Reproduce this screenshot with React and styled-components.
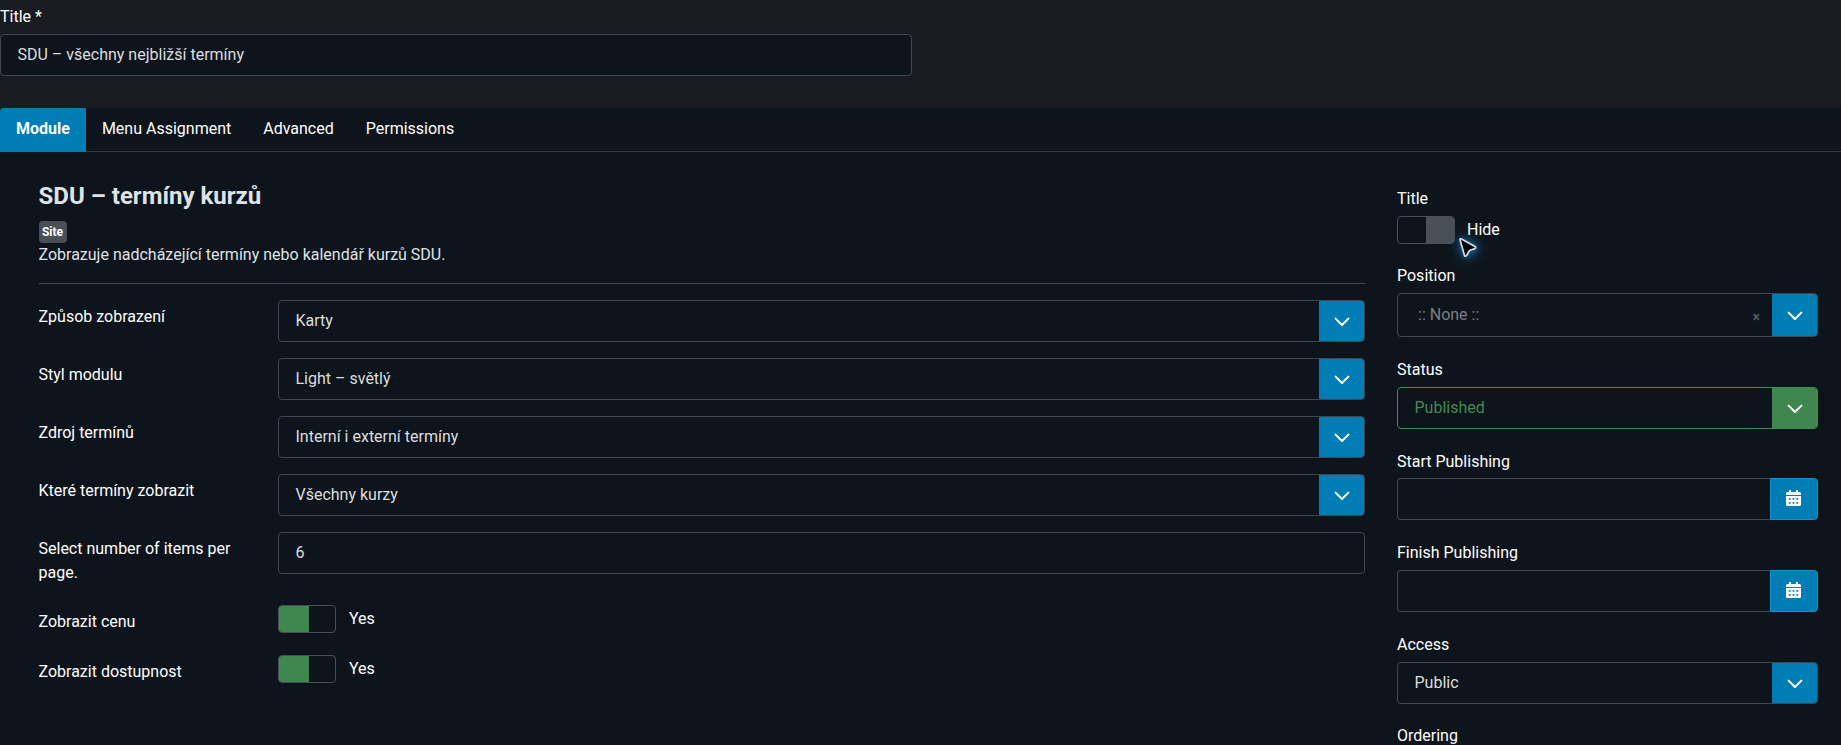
import React, { useState } from 'react';
import styled, { createGlobalStyle } from 'styled-components';

const GlobalStyle = createGlobalStyle`
    * {
        box-sizing: border-box;
    }
    html {
        background-color: #0e141b;
    }
    body {
        margin: 0;
        background-color: #0e141b;
        color: #fff;
        font-family: Roboto, sans-serif;
        font-size: 16px;
        line-height: 24px;
    }
`;

const Page = styled.div`
    height: 100vh;
    overflow: hidden;
    background-color: #0e141b;
`;

const TitleBar = styled.header`
    height: 108px;
    padding-top: 5px;
    background-color: #181b22;
`;

const Label = styled.label`
    display: block;
    height: 24px;
    margin-bottom: ${props => props.$gap || 0};
`;

const Input = styled.input`
    display: block;
    width: ${props => props.$width || '100%'};
    height: 42px;
    padding: 0 16.5px 2px;
    border: 1px solid #41464d;
    border-radius: 4px;
    background-color: #0e141b;
    color: #dcdedf;
    font: inherit;
    outline: none;
`;

const Tabs = styled.nav`
    display: flex;
    height: 44px;
    border-bottom: 1px solid #343a42;
    background-color: #0e141b;
`;

const Tab = styled.button`
    height: 44px;
    padding: 0 16px 3px;
    border: 0;
    border-radius: ${props => (props.$active ? '4px 0 0 0' : '0')};
    background-color: ${props => (props.$active ? '#007db5' : 'transparent')};
    color: #fff;
    font: inherit;
    font-weight: ${props => (props.$active ? 700 : 400)};
    cursor: pointer;
`;

const Content = styled.main`
    display: flex;
    gap: 32px;
    padding: 0 23px 0 38.5px;
`;

const Main = styled.section`
    flex: 1;
    padding-top: 30px;
`;

const Sidebar = styled.aside`
    width: 421px;
    padding-top: 35px;
`;

const Heading = styled.h2`
    margin: 0 0 10px;
    color: #dfe3e7;
    font-size: 24px;
    font-weight: 700;
    line-height: 29px;
`;

const Badge = styled.span`
    display: block;
    width: 28px;
    height: 22px;
    border-radius: 4px;
    background-color: #495057;
    font-size: 12px;
    font-weight: 700;
    line-height: 22px;
    text-align: center;
`;

const Description = styled.p`
    height: 41px;
    margin: 0 0 16px;
    border-bottom: 1px solid #43484e;
    color: #dfe3e7;
    line-height: 23px;
`;

const Row = styled.div`
    display: grid;
    grid-template-columns: 239.5px 1fr;
    min-height: 42px;
    margin-bottom: ${props => props.$gap || '16px'};
`;

const RowLabel = styled.label`
    max-width: 200px;
    padding-top: 5px;
`;

const Field = styled.div`
    margin-bottom: ${props => props.$gap || '20px'};
`;

const SelectBox = styled.div`
    display: flex;
    height: ${props => props.$height || '42px'};
    border: 1px solid ${props => (props.$success ? '#438a52' : '#41464d')};
    border-radius: 4px;
    overflow: hidden;
    color: ${props => (props.$success ? '#438a52' : '#dcdedf')};
    cursor: pointer;
`;

const SelectValue = styled.span`
    flex: 1;
    padding: ${props => (props.$muted ? '9px 0 0 20px' : '8px 0 0 16.5px')};
    color: ${props => (props.$muted ? '#7b7f84' : 'inherit')};
`;

const Clear = styled.span`
    padding: 11px 12px 0 0;
    color: #555a60;
    font-size: 14px;
    font-weight: 700;
`;

const SelectArrow = styled.span`
    display: flex;
    align-items: center;
    justify-content: center;
    width: 46px;
    margin: -1px -1px -1px 0;
    padding-top: 2px;
    border: 1px solid ${props => (props.$success ? '#438a52' : '#2a88b5')};
    border-left: 0;
    border-radius: 0 4px 4px 0;
    background-color: ${props => (props.$success ? '#40874f' : '#007db5')};
`;

const DateGroup = styled.div`
    display: flex;

    input {
        flex: 1;
        border-right: 0;
        border-radius: 4px 0 0 4px;
    }
`;

const DateButton = styled.button`
    display: flex;
    align-items: center;
    justify-content: center;
    width: 48px;
    height: 42px;
    padding: 0 1px 2px 0;
    border: 1px solid #0f93cf;
    border-radius: 0 4px 4px 0;
    background-color: #007db5;
`;

const SwitchLine = styled.div`
    display: flex;
    position: relative;
    gap: ${props => props.$gap || '13px'};
    line-height: 27px;
    cursor: pointer;
`;

const Track = styled.span`
    display: flex;
    justify-content: ${props => (props.$on ? 'flex-start' : 'flex-end')};
    width: 58px;
    height: 28px;
    border: 1px solid #495057;
    border-radius: 4px;
    overflow: hidden;
`;

const Thumb = styled.span`
    width: ${props => (props.$on ? '30px' : '28px')};
    background-color: ${props => (props.$on ? '#40874f' : '#495057')};
`;

const Pointer = styled.svg`
    position: absolute;
    left: 61px;
    top: 21px;
    overflow: visible;
    filter: drop-shadow(0 0 2px #14588c) drop-shadow(1px 1px 6px #1670b8);
    pointer-events: none;
`;

const Chevron = () => (
    <svg width="16" height="10" viewBox="0 0 16 10" fill="none">
        <path d="M1.6 1.6 8 8l6.4-6.4" stroke="#fff" strokeWidth="2" strokeLinecap="round" strokeLinejoin="round" />
    </svg>
);

const Calendar = () => (
    <svg width="15" height="16" viewBox="0 0 15 16" fill="#fff">
        <path d="M3 0h2v2h5V0h2v2h1.5A1.5 1.5 0 0 1 15 3.500V5H0V3.500A1.5 1.5 0 0 1 1.500 2H3Z" />
        <path
            fillRule="evenodd"
            d="M0 6h15v8.500a1.500 1.500 0 0 1-1.500 1.500h-12A1.500 1.500 0 0 1 0 14.500ZM2.800 8v1.800h1.800v-1.800ZM6.600 8v1.800h1.800v-1.800ZM10.400 8v1.800h1.800v-1.800ZM2.800 12v1.800h1.800v-1.800ZM6.600 12v1.800h1.800v-1.800ZM10.400 12v1.800h1.800v-1.800Z"
        />
    </svg>
);

const Select = ({ value, success, muted, height }) => (
    <SelectBox $success={success} $height={height}>
        <SelectValue $muted={muted}>{value}</SelectValue>
        {muted && <Clear>×</Clear>}
        <SelectArrow $success={success}><Chevron /></SelectArrow>
    </SelectBox>
);

const Switch = ({ initial, labels, gap, children }) => {
    const [on, setOn] = useState(initial);
    return (
        <SwitchLine $gap={gap} onClick={() => setOn(!on)}>
            <Track $on={on}><Thumb $on={on} /></Track>
            <span>{on ? labels[1] : labels[0]}</span>
            {children}
        </SwitchLine>
    );
};

const DateInput = () => (
    <DateGroup>
        <Input />
        <DateButton><Calendar /></DateButton>
    </DateGroup>
);

const tabs = ['Module', 'Menu Assignment', 'Advanced', 'Permissions'];

const selects = [
    { label: 'Způsob zobrazení', value: 'Karty' },
    { label: 'Styl modulu', value: 'Light – světlý' },
    { label: 'Zdroj termínů', value: 'Interní i externí termíny' },
    { label: 'Které termíny zobrazit', value: 'Všechny kurzy' },
];

const App = () => {
    const [active, setActive] = useState('Module');

    return (
        <Page>
            <GlobalStyle />
            <TitleBar>
                <Label $gap="5px">Title *</Label>
                <Input $width="912px" defaultValue="SDU – všechny nejbližší termíny" />
            </TitleBar>
            <Tabs>
                {tabs.map(tab => (
                    <Tab key={tab} $active={tab === active} onClick={() => setActive(tab)}>{tab}</Tab>
                ))}
            </Tabs>
            <Content>
                <Main>
                    <Heading>SDU – termíny kurzů</Heading>
                    <Badge>Site</Badge>
                    <Description>Zobrazuje nadcházející termíny nebo kalendář kurzů SDU.</Description>
                    {selects.map(item => (
                        <Row key={item.label}>
                            <RowLabel>{item.label}</RowLabel>
                            <Select value={item.value} />
                        </Row>
                    ))}
                    <Row $gap="20px">
                        <RowLabel>Select number of items per page.</RowLabel>
                        <Input defaultValue="6" />
                    </Row>
                    <Row $gap="8px">
                        <RowLabel>Zobrazit cenu</RowLabel>
                        <Switch initial={true} labels={['No', 'Yes']} />
                    </Row>
                    <Row>
                        <RowLabel>Zobrazit dostupnost</RowLabel>
                        <Switch initial={true} labels={['No', 'Yes']} />
                    </Row>
                </Main>
                <Sidebar>
                    <Field>
                        <Label $gap="5px">Title</Label>
                        <Switch initial={false} labels={['Hide', 'Show']} gap="12px">
                            <Pointer width="20" height="22" viewBox="0 0 20 22">
                                <path
                                    d="M2 2.500 6.500 18.500Q7.300 20 8.600 18.500L11.500 13.500 17 11.600Q18.500 10.600 17 9.600L3.500 2Q2 1.400 2 2.500Z"
                                    fill="#000"
                                    stroke="#d4dbe2"
                                    strokeWidth="1.700"
                                    strokeLinejoin="round"
                                />
                            </Pointer>
                        </Switch>
                    </Field>
                    <Field $gap="21px">
                        <Label $gap="5px">Position</Label>
                        <Select value=":: None ::" muted height="44px" />
                    </Field>
                    <Field $gap="21px">
                        <Label $gap="5px">Status</Label>
                        <Select value="Published" success />
                    </Field>
                    <Field $gap="21px">
                        <Label $gap="4px">Start Publishing</Label>
                        <DateInput />
                    </Field>
                    <Field $gap="21px">
                        <Label $gap="5px">Finish Publishing</Label>
                        <DateInput />
                    </Field>
                    <Field>
                        <Label $gap="5px">Access</Label>
                        <Select value="Public" />
                    </Field>
                    <Label>Ordering</Label>
                </Sidebar>
            </Content>
        </Page>
    );
};

export default App;
